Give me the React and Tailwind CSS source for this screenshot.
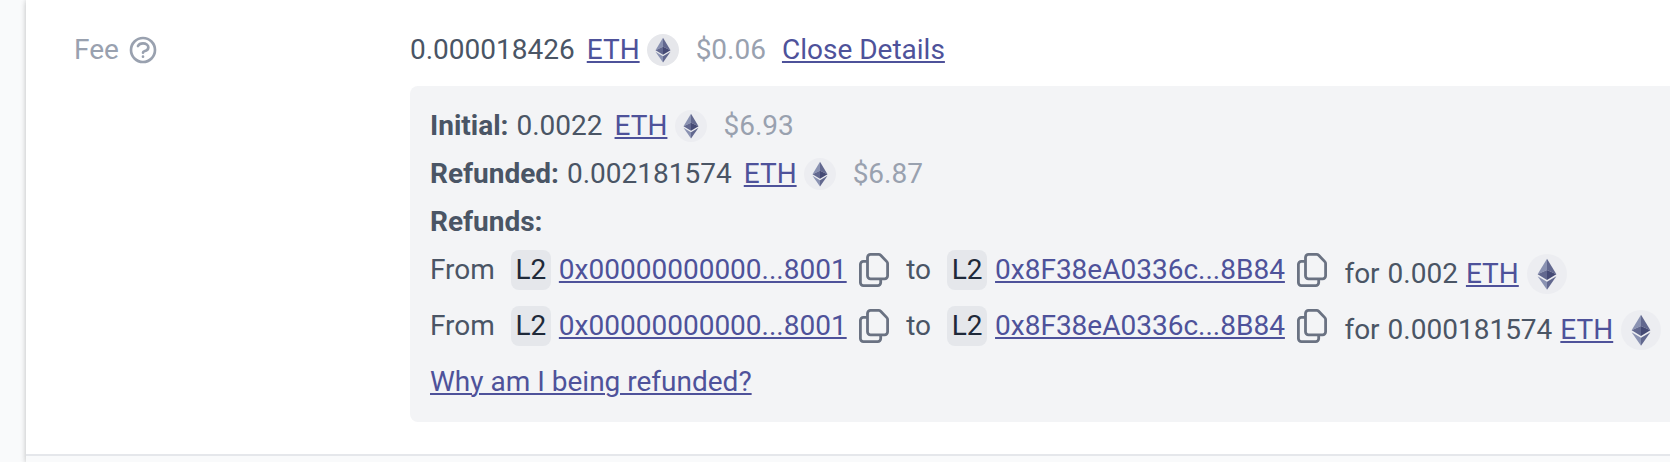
const HELP =
  "M8.228 9c.549-1.165 2.03-2 3.772-2 2.21 0 4 1.343 4 3 0 1.4-1.278 2.575-3.006 2.907-.542.104-.994.54-.994 1.093m0 3h.01M21 12a9 9 0 11-18 0 9 9 0 0118 0z";

function HelpIcon() {
  return (
    <svg className="ml-2 size-8 shrink-0" viewBox="0 0 24 24" fill="none" stroke="currentColor" strokeWidth="2" strokeLinecap="round" strokeLinejoin="round">
      <path d={HELP} />
    </svg>
  );
}

function EthIcon({ className }) {
  return (
    <svg className={"shrink-0 " + className} viewBox="0 0 32 32">
      <circle cx="16" cy="16" r="16" fill="currentColor" />
      <path fill="#8a92b2" d="M16 3.8v8.9L8.5 16.2z" />
      <path fill="#62688f" d="M16 3.8v8.9l7.5 3.5z" />
      <path fill="#62688f" d="M16 12.7v8L8.5 16.2z" />
      <path fill="#454a75" d="M16 12.7v8l7.5-4.5z" />
      <path fill="#8a92b2" d="M16 22.2v6.3L8.5 17.8z" />
      <path fill="#62688f" d="M16 22.2v6.3l7.5-10.7z" />
    </svg>
  );
}

function CopyIcon() {
  return (
    <svg className="h-[34px] w-[30px] shrink-0 text-gray-500" viewBox="0 0 30 34" fill="none" stroke="currentColor" strokeWidth="2.8" strokeLinejoin="round">
      <path d="M11.5 1.4h8.2a3 3 0 0 1 2 .8l6.1 6.4a3 3 0 0 1 .8 2v12.2a3 3 0 0 1-3 3H11.5a3 3 0 0 1-3-3V4.4a3 3 0 0 1 3-3z" />
      <path d="M8.5 8.3H4.4a3 3 0 0 0-3 3v18.3a3 3 0 0 0 3 3h14.3a3 3 0 0 0 3-3v-4" />
    </svg>
  );
}

function Link({ className = "", children }) {
  return (
    <a href="#" className={"text-[#4e529a] underline decoration-2 underline-offset-2 " + className}>
      {children}
    </a>
  );
}

function Amount({ value, usd, iconClass = "ml-2 text-[#ecedf1]" }) {
  return (
    <>
      <span>{value}</span>
      <Link className="ml-3">ETH</Link>
      <EthIcon className={"size-8 " + iconClass} />
      <span className="ml-4 text-gray-400">{usd}</span>
    </>
  );
}

function Address({ children }) {
  return (
    <>
      <span className="flex size-10 shrink-0 items-center justify-center rounded-lg bg-gray-200 text-gray-800">L2</span>
      <Link className="ml-2">{children}</Link>
      <span className="ml-3 flex shrink-0">
        <CopyIcon />
      </span>
    </>
  );
}

function Refund({ amount }) {
  return (
    <div className="flex h-14 items-start">
      <div className="flex h-12 items-center">
        <span className="mr-4">From</span>
        <Address>0x00000000000...8001</Address>
        <span className="mr-4 ml-[17.5px]">to</span>
        <Address>0x8F38eA0336c...8B84</Address>
      </div>
      <div className="ml-[17.5px] flex h-14 items-center">
        <span className="mr-2">for</span>
        <span>{amount}</span>
        <Link className="ml-2">ETH</Link>
        <EthIcon className="ml-2 size-10 text-[#ecedf1]" />
      </div>
    </div>
  );
}

export default function App() {
  return (
    <div className="h-[462px] w-full overflow-hidden bg-gray-50 pl-[26px] font-['Roboto',sans-serif] text-[28px] leading-[48px] whitespace-nowrap text-gray-600 antialiased">
      <div className="h-full bg-gray-50 shadow-[0_2px_6px_rgba(0,0,0,0.12),0_0_5px_rgba(0,0,0,0.14)]">
        <div className="flex h-[456px] border-b-2 border-gray-200 bg-white pt-[26px] pl-12">
          <div className="flex h-12 w-[336px] shrink-0 items-center text-gray-400">
            <span>Fee</span>
            <HelpIcon />
          </div>
          <div className="min-w-0 flex-1">
            <div className="flex h-12 items-center">
              <Amount value="0.000018426" usd="$0.06" iconClass="ml-[7px] mr-px text-[#e6e7eb]" />
              <Link className="ml-4">Close Details</Link>
            </div>
            <div className="mt-3 h-[336px] rounded-l-lg bg-gray-100 py-4 pl-5">
              <div className="flex h-12 items-center">
                <b className="mr-2">Initial:</b>
                <Amount value="0.0022" usd="$6.93" />
              </div>
              <div className="flex h-12 items-center">
                <b className="mr-2">Refunded:</b>
                <Amount value="0.002181574" usd="$6.87" iconClass="ml-[7px] mr-px text-[#ecedf1]" />
              </div>
              <div className="h-12">
                <b>Refunds:</b>
              </div>
              <Refund amount="0.002" />
              <Refund amount="0.000181574" />
              <div className="h-12">
                <Link>Why am I being refunded?</Link>
              </div>
            </div>
          </div>
        </div>
      </div>
    </div>
  );
}
